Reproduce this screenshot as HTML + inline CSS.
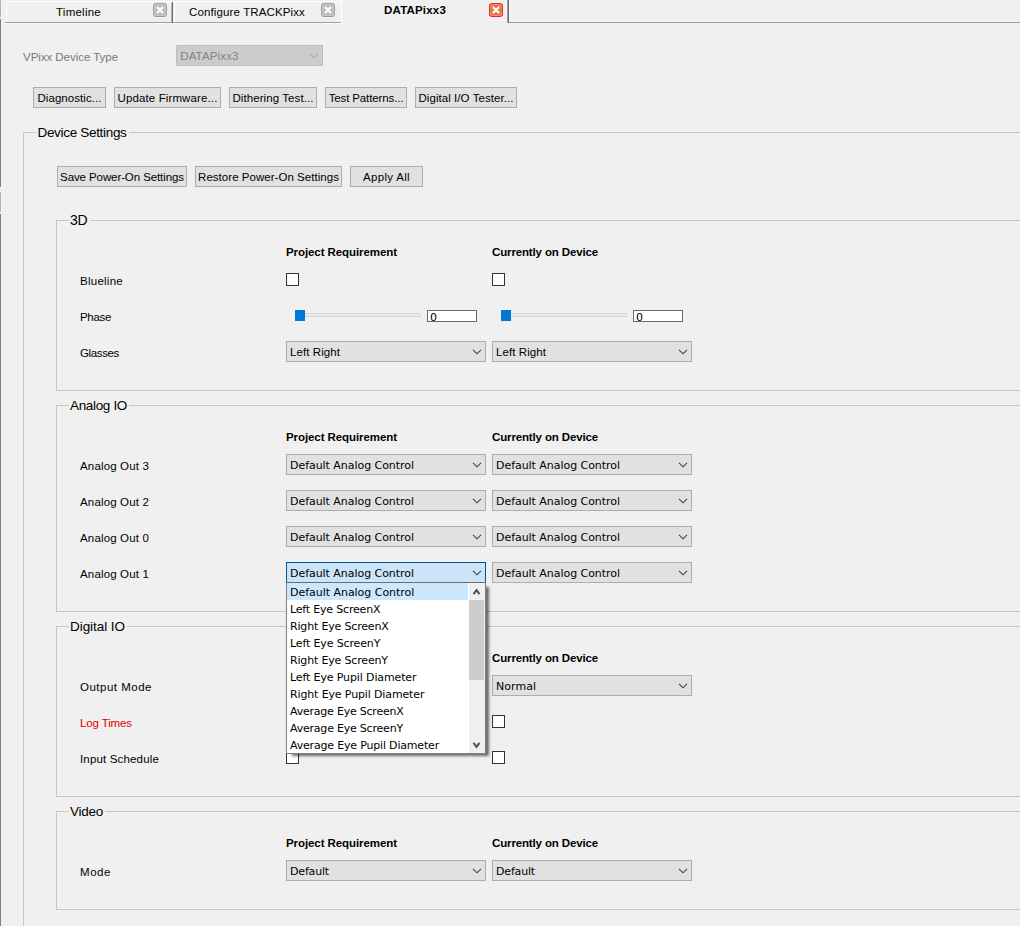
<!DOCTYPE html>
<html lang="en">
<head>
<meta charset="utf-8">
<title>DATAPixx3 - Device Settings</title>
<style>
html,body{margin:0;padding:0;}
body{width:1020px;height:926px;overflow:hidden;background:#f0f0f0;position:relative;font-family:"Liberation Sans",sans-serif;font-size:11.5px;color:#000;}
div,span,button,label,ul,li,input,fieldset,legend{box-sizing:border-box;}
body *{position:absolute;margin:0;padding:0;}
.t{white-space:nowrap;line-height:normal;}
.bl{display:inline-block;position:static;width:0;height:0;vertical-align:baseline;}
svg{overflow:visible;}

.btn{background:#e1e1e1;border:1px solid #adadad;}
.combo{background:#e1e1e1;border:1px solid #adadad;}
.combo.dis{background:#cccccc;border-color:#bfbfbf;}
.combo.focus{background:#cce4f7;border-color:#005499;}
.chk{background:#fff;border:1px solid #333;}
.edit{background:#fff;border:1px solid #6a6a6a;}
.track{background:#e7eaea;border:1px solid #d6d6d6;}
.handle{background:#0078d7;}
.gl{background:#dcdcdc;}
li.sel{background:#cce8ff;}
button{font:inherit;color:inherit;overflow:visible;}

</style>
</head>
<body>
<div style="left:0px;top:0px;width:1px;height:17px;background:#b4b4b4;"></div>
<div style="left:0px;top:19px;width:1px;height:168px;background:#7c818d;"></div>
<div style="left:0px;top:192px;width:1px;height:20px;background:#b4b4b4;"></div>
<div style="left:0px;top:214px;width:1px;height:712px;background:#7c818d;"></div>
<div class="tabbar" style="left:0px;top:0px;width:1020px;height:24px;">
<div style="left:5px;top:22px;width:336px;height:1px;background:#a0a0a0;"></div>
<div style="left:507px;top:22px;width:513px;height:1px;background:#a0a0a0;"></div>
<div style="left:5px;top:23px;width:336px;height:1px;background:#f8f8f8;"></div>
<div style="left:8px;top:1px;width:162px;height:1px;background:#ffffff;"></div>
<div style="left:6px;top:3px;width:1px;height:19px;background:#ffffff;"></div>
<div style="left:7px;top:2px;width:1px;height:1px;background:#ffffff;"></div>
<div style="left:172px;top:2px;width:1px;height:21px;background:#696969;"></div>
<div style="left:171px;top:3px;width:1px;height:19px;background:#b4b4b4;"></div>
<div style="left:175px;top:1px;width:166px;height:1px;background:#ffffff;"></div>
<div style="left:174px;top:2px;width:1px;height:20px;background:#ffffff;"></div>
<div style="left:341px;top:0px;width:1px;height:24px;background:#ffffff;"></div>
<div style="left:507px;top:0px;width:1px;height:23px;background:#a4a4a4;"></div>
<div style="left:508px;top:0px;width:1px;height:23px;background:#696969;"></div>
<div style="left:509px;top:0px;width:1px;height:22px;background:#fafafa;"></div>
<span class="t" style='left:56px;top:6.00px;font-size:11.5px;letter-spacing:0.246px;'>Timeline</span>
<span class="t" style='left:189px;top:6.00px;font-size:11.5px;letter-spacing:0.128px;'>Configure TRACKPixx</span>
<span class="t" style='left:384px;top:4.00px;font-size:11.5px;font-weight:700;letter-spacing:0.189px;'>DATAPixx3</span>
<div class="close" style="left:153px;top:3px;width:14px;height:14px;background:#bdbdbd;border:1px solid #9e9e9e;border-radius:2.5px;box-shadow:inset 0 0 0 1px rgba(255,255,255,0.16);">
<svg style="left:-1px;top:-1px;width:14px;height:14px"><path d="M4,4 L10,10 M10,4 L4,10" stroke="#fff" stroke-width="2" fill="none"/></svg>
</div>
<div class="close" style="left:321px;top:3px;width:14px;height:14px;background:#bdbdbd;border:1px solid #9e9e9e;border-radius:2.5px;box-shadow:inset 0 0 0 1px rgba(255,255,255,0.16);">
<svg style="left:-1px;top:-1px;width:14px;height:14px"><path d="M4,4 L10,10 M10,4 L4,10" stroke="#fff" stroke-width="2" fill="none"/></svg>
</div>
<div class="close" style="left:489px;top:3px;width:14px;height:14px;background:#e27a4e;border:1px solid #d6331f;border-radius:2.5px;box-shadow:inset 0 0 0 1px rgba(255,255,255,0.16);">
<svg style="left:-1px;top:-1px;width:14px;height:14px"><path d="M4,4 L10,10 M10,4 L4,10" stroke="#fff" stroke-width="2" fill="none"/></svg>
</div>
</div>
<span class="t" style='left:23px;top:51.00px;font-size:11.5px;color:#787878;letter-spacing:-0.040px;'>VPixx Device Type</span>
<div class="combo dis" style="left:176px;top:45px;width:147px;height:21px;">
<span class="t" style='left:3.2px;top:4.00px;font-size:11.5px;color:#838383;letter-spacing:0.156px;'>DATAPixx3</span>
<svg class="arrow" style="left:-177px;top:-46px;width:1px;height:1px"><path d="M310,53.8 L314,57.8 L318,53.8" fill="none" stroke="#ababab" stroke-width="1.1"/></svg>
</div>
<button class="btn" style="left:33px;top:87px;width:73px;height:21px;">
<span class="t" style='left:3.5px;top:4.00px;font-size:11.5px;letter-spacing:0.055px;'>Diagnostic...</span>
</button>
<button class="btn" style="left:114px;top:87px;width:107px;height:21px;">
<span class="t" style='left:2.5px;top:4.00px;font-size:11.5px;letter-spacing:0.123px;'>Update Firmware...</span>
</button>
<button class="btn" style="left:229px;top:87px;width:88px;height:21px;">
<span class="t" style='left:2.45px;top:4.00px;font-size:11.5px;letter-spacing:0.083px;'>Dithering Test...</span>
</button>
<button class="btn" style="left:325px;top:87px;width:82px;height:21px;">
<span class="t" style='left:2.65px;top:4.00px;font-size:11.5px;letter-spacing:-0.125px;'>Test Patterns...</span>
</button>
<button class="btn" style="left:415px;top:87px;width:102px;height:21px;">
<span class="t" style='left:2.45px;top:4.00px;font-size:11.5px;letter-spacing:0.064px;'>Digital I/O Tester...</span>
</button>
<fieldset style="left:0px;top:0px;width:0px;height:0px;border:0;">
<div style="left:23px;top:132px;width:1px;height:1869px;background:#c6c7c5;"></div>
<div style="left:23px;top:132px;width:13px;height:1px;background:#c6c7c5;"></div>
<div style="left:129px;top:132px;width:891px;height:1px;background:#c6c7c5;"></div>
<div style="left:23px;top:2000px;width:997px;height:1px;background:#c6c7c5;"></div>
<span class="t legend" style='left:37.5px;top:125.00px;font-size:13.5px;letter-spacing:-0.320px;'>Device Settings</span>
</fieldset>
<button class="btn" style="left:57px;top:166px;width:130px;height:21px;">
<span class="t" style='left:2.05px;top:4.00px;font-size:11.5px;letter-spacing:-0.092px;'>Save Power-On Settings</span>
</button>
<button class="btn" style="left:195px;top:166px;width:147px;height:21px;">
<span class="t" style='left:2.05px;top:4.00px;font-size:11.5px;letter-spacing:0.037px;'>Restore Power-On Settings</span>
</button>
<button class="btn" style="left:350px;top:166px;width:73px;height:21px;">
<span class="t" style='left:12px;top:4.00px;font-size:11.5px;letter-spacing:0.321px;'>Apply All</span>
</button>
<fieldset style="left:0px;top:0px;width:0px;height:0px;border:0;">
<div style="left:56px;top:220px;width:1px;height:171px;background:#c6c7c5;"></div>
<div style="left:56px;top:220px;width:13px;height:1px;background:#c6c7c5;"></div>
<div style="left:90px;top:220px;width:930px;height:1px;background:#c6c7c5;"></div>
<div style="left:56px;top:390px;width:964px;height:1px;background:#c6c7c5;"></div>
<span class="t legend" style='left:70px;top:212.00px;font-size:14px;letter-spacing:-0.203px;'>3D</span>
</fieldset>
<span class="t" style='left:286px;top:246.00px;font-size:11.5px;font-weight:700;letter-spacing:-0.078px;'>Project Requirement</span>
<span class="t" style='left:492px;top:246.00px;font-size:11.5px;font-weight:700;letter-spacing:-0.140px;'>Currently on Device</span>
<span class="t" style='left:80px;top:275.00px;font-size:11.5px;letter-spacing:0.260px;'>Blueline</span>
<div class="chk" style="left:286px;top:273px;width:13px;height:13px;"></div>
<div class="chk" style="left:492px;top:273px;width:13px;height:13px;"></div>
<span class="t" style='left:80px;top:311.00px;font-size:11.5px;letter-spacing:-0.322px;'>Phase</span>
<div class="track" style="left:304px;top:313px;width:117px;height:4px;"></div>
<div class="handle" style="left:295px;top:310px;width:10px;height:11px;"></div>
<div class="edit" style="left:427px;top:310px;width:50px;height:12px;">
<span class="t" style='left:2px;top:0.00px;font-size:11px;font-family:"DejaVu Sans", sans-serif;'>0</span>
</div>
<div class="track" style="left:510px;top:313px;width:117px;height:4px;"></div>
<div class="handle" style="left:501px;top:310px;width:10px;height:11px;"></div>
<div class="edit" style="left:633px;top:310px;width:50px;height:12px;">
<span class="t" style='left:2px;top:0.00px;font-size:11px;font-family:"DejaVu Sans", sans-serif;'>0</span>
</div>
<span class="t" style='left:80px;top:347.00px;font-size:11.5px;letter-spacing:-0.364px;'>Glasses</span>
<div class="combo" style="left:286px;top:341px;width:200px;height:21px;">
<span class="t" style='left:3px;top:4.00px;font-size:11.5px;letter-spacing:0.077px;'>Left Right</span>
<svg class="arrow" style="left:-287px;top:-342px;width:1px;height:1px"><path d="M473,349.8 L477,353.8 L481,349.8" fill="none" stroke="#404040" stroke-width="1.1"/></svg>
</div>
<div class="combo" style="left:492px;top:341px;width:200px;height:21px;">
<span class="t" style='left:3px;top:4.00px;font-size:11.5px;letter-spacing:0.077px;'>Left Right</span>
<svg class="arrow" style="left:-493px;top:-342px;width:1px;height:1px"><path d="M679,349.8 L683,353.8 L687,349.8" fill="none" stroke="#404040" stroke-width="1.1"/></svg>
</div>
<fieldset style="left:0px;top:0px;width:0px;height:0px;border:0;">
<div style="left:56px;top:405px;width:1px;height:207px;background:#c6c7c5;"></div>
<div style="left:56px;top:405px;width:13px;height:1px;background:#c6c7c5;"></div>
<div style="left:129px;top:405px;width:891px;height:1px;background:#c6c7c5;"></div>
<div style="left:56px;top:611px;width:964px;height:1px;background:#c6c7c5;"></div>
<span class="t legend" style='left:70px;top:398.00px;font-size:13.5px;letter-spacing:-0.339px;'>Analog IO</span>
</fieldset>
<span class="t" style='left:286px;top:431.00px;font-size:11.5px;font-weight:700;letter-spacing:-0.078px;'>Project Requirement</span>
<span class="t" style='left:492px;top:431.00px;font-size:11.5px;font-weight:700;letter-spacing:-0.140px;'>Currently on Device</span>
<span class="t" style='left:80px;top:460.00px;font-size:11.5px;letter-spacing:0.155px;'>Analog Out 3</span>
<div class="combo" style="left:286px;top:454px;width:200px;height:21px;">
<span class="t" style='left:3px;top:4.00px;font-size:11px;font-family:"DejaVu Sans", sans-serif;letter-spacing:-0.043px;'>Default Analog Control</span>
<svg class="arrow" style="left:-287px;top:-455px;width:1px;height:1px"><path d="M473,462.8 L477,466.8 L481,462.8" fill="none" stroke="#404040" stroke-width="1.1"/></svg>
</div>
<div class="combo" style="left:492px;top:454px;width:200px;height:21px;">
<span class="t" style='left:3px;top:4.00px;font-size:11px;font-family:"DejaVu Sans", sans-serif;letter-spacing:-0.043px;'>Default Analog Control</span>
<svg class="arrow" style="left:-493px;top:-455px;width:1px;height:1px"><path d="M679,462.8 L683,466.8 L687,462.8" fill="none" stroke="#404040" stroke-width="1.1"/></svg>
</div>
<span class="t" style='left:80px;top:496.00px;font-size:11.5px;letter-spacing:0.155px;'>Analog Out 2</span>
<div class="combo" style="left:286px;top:490px;width:200px;height:21px;">
<span class="t" style='left:3px;top:4.00px;font-size:11px;font-family:"DejaVu Sans", sans-serif;letter-spacing:-0.043px;'>Default Analog Control</span>
<svg class="arrow" style="left:-287px;top:-491px;width:1px;height:1px"><path d="M473,498.8 L477,502.8 L481,498.8" fill="none" stroke="#404040" stroke-width="1.1"/></svg>
</div>
<div class="combo" style="left:492px;top:490px;width:200px;height:21px;">
<span class="t" style='left:3px;top:4.00px;font-size:11px;font-family:"DejaVu Sans", sans-serif;letter-spacing:-0.043px;'>Default Analog Control</span>
<svg class="arrow" style="left:-493px;top:-491px;width:1px;height:1px"><path d="M679,498.8 L683,502.8 L687,498.8" fill="none" stroke="#404040" stroke-width="1.1"/></svg>
</div>
<span class="t" style='left:80px;top:532.00px;font-size:11.5px;letter-spacing:0.155px;'>Analog Out 0</span>
<div class="combo" style="left:286px;top:526px;width:200px;height:21px;">
<span class="t" style='left:3px;top:4.00px;font-size:11px;font-family:"DejaVu Sans", sans-serif;letter-spacing:-0.043px;'>Default Analog Control</span>
<svg class="arrow" style="left:-287px;top:-527px;width:1px;height:1px"><path d="M473,534.8 L477,538.8 L481,534.8" fill="none" stroke="#404040" stroke-width="1.1"/></svg>
</div>
<div class="combo" style="left:492px;top:526px;width:200px;height:21px;">
<span class="t" style='left:3px;top:4.00px;font-size:11px;font-family:"DejaVu Sans", sans-serif;letter-spacing:-0.043px;'>Default Analog Control</span>
<svg class="arrow" style="left:-493px;top:-527px;width:1px;height:1px"><path d="M679,534.8 L683,538.8 L687,534.8" fill="none" stroke="#404040" stroke-width="1.1"/></svg>
</div>
<span class="t" style='left:80px;top:568.00px;font-size:11.5px;letter-spacing:0.155px;'>Analog Out 1</span>
<div class="combo focus" style="left:286px;top:562px;width:200px;height:21px;">
<span class="t" style='left:3px;top:4.00px;font-size:11px;font-family:"DejaVu Sans", sans-serif;letter-spacing:-0.043px;'>Default Analog Control</span>
<svg class="arrow" style="left:-287px;top:-563px;width:1px;height:1px"><path d="M473,570.8 L477,574.8 L481,570.8" fill="none" stroke="#404040" stroke-width="1.1"/></svg>
</div>
<div class="combo" style="left:492px;top:562px;width:200px;height:21px;">
<span class="t" style='left:3px;top:4.00px;font-size:11px;font-family:"DejaVu Sans", sans-serif;letter-spacing:-0.043px;'>Default Analog Control</span>
<svg class="arrow" style="left:-493px;top:-563px;width:1px;height:1px"><path d="M679,570.8 L683,574.8 L687,570.8" fill="none" stroke="#404040" stroke-width="1.1"/></svg>
</div>
<fieldset style="left:0px;top:0px;width:0px;height:0px;border:0;">
<div style="left:56px;top:626px;width:1px;height:171px;background:#c6c7c5;"></div>
<div style="left:56px;top:626px;width:13px;height:1px;background:#c6c7c5;"></div>
<div style="left:127px;top:626px;width:893px;height:1px;background:#c6c7c5;"></div>
<div style="left:56px;top:796px;width:964px;height:1px;background:#c6c7c5;"></div>
<span class="t legend" style='left:70px;top:619.00px;font-size:13.5px;letter-spacing:-0.053px;'>Digital IO</span>
</fieldset>
<span class="t" style='left:492px;top:652.00px;font-size:11.5px;font-weight:700;letter-spacing:-0.140px;'>Currently on Device</span>
<span class="t" style='left:80px;top:681.00px;font-size:11.5px;letter-spacing:0.501px;'>Output Mode</span>
<div class="combo" style="left:492px;top:675px;width:200px;height:21px;">
<span class="t" style='left:3px;top:4.00px;font-size:11px;font-family:"DejaVu Sans", sans-serif;letter-spacing:0.031px;'>Normal</span>
<svg class="arrow" style="left:-493px;top:-676px;width:1px;height:1px"><path d="M679,683.8 L683,687.8 L687,683.8" fill="none" stroke="#404040" stroke-width="1.1"/></svg>
</div>
<span class="t" style='left:80px;top:717.00px;font-size:11.5px;color:#e00000;letter-spacing:-0.118px;'>Log Times</span>
<div class="chk" style="left:492px;top:715px;width:13px;height:13px;"></div>
<span class="t" style='left:80px;top:753.00px;font-size:11.5px;letter-spacing:0.162px;'>Input Schedule</span>
<div class="chk" style="left:286px;top:751px;width:13px;height:13px;"></div>
<div class="chk" style="left:492px;top:751px;width:13px;height:13px;"></div>
<fieldset style="left:0px;top:0px;width:0px;height:0px;border:0;">
<div style="left:56px;top:811px;width:1px;height:99px;background:#c6c7c5;"></div>
<div style="left:56px;top:811px;width:13px;height:1px;background:#c6c7c5;"></div>
<div style="left:105px;top:811px;width:915px;height:1px;background:#c6c7c5;"></div>
<div style="left:56px;top:909px;width:964px;height:1px;background:#c6c7c5;"></div>
<span class="t legend" style='left:70px;top:804.00px;font-size:13.5px;letter-spacing:-0.259px;'>Video</span>
</fieldset>
<span class="t" style='left:286px;top:837.00px;font-size:11.5px;font-weight:700;letter-spacing:-0.078px;'>Project Requirement</span>
<span class="t" style='left:492px;top:837.00px;font-size:11.5px;font-weight:700;letter-spacing:-0.140px;'>Currently on Device</span>
<span class="t" style='left:80px;top:866.00px;font-size:11.5px;letter-spacing:0.555px;'>Mode</span>
<div class="combo" style="left:286px;top:860px;width:200px;height:21px;">
<span class="t" style='left:3px;top:4.00px;font-size:11px;font-family:"DejaVu Sans", sans-serif;letter-spacing:-0.172px;'>Default</span>
<svg class="arrow" style="left:-287px;top:-861px;width:1px;height:1px"><path d="M473,868.8 L477,872.8 L481,868.8" fill="none" stroke="#404040" stroke-width="1.1"/></svg>
</div>
<div class="combo" style="left:492px;top:860px;width:200px;height:21px;">
<span class="t" style='left:3px;top:4.00px;font-size:11px;font-family:"DejaVu Sans", sans-serif;letter-spacing:-0.172px;'>Default</span>
<svg class="arrow" style="left:-493px;top:-861px;width:1px;height:1px"><path d="M679,868.8 L683,872.8 L687,868.8" fill="none" stroke="#404040" stroke-width="1.1"/></svg>
</div>
<div class="popup" style="left:286px;top:582px;width:200px;height:172px;background:#fff;border:1px solid #7c808a;border-top-color:#6f6f6f;box-shadow:4px 3.5px 2.5px -1.5px rgba(0,0,0,0.55);">
<ul style="left:0px;top:0px;width:0px;height:0px;list-style:none;">
<li class="sel" style="left:0px;top:0px;width:181px;height:17px;">
<span class="t" style='left:3px;top:3.00px;font-size:11px;font-family:"DejaVu Sans", sans-serif;letter-spacing:-0.030px;'>Default Analog Control</span>
</li>
<li style="left:0px;top:17px;width:181px;height:17px;">
<span class="t" style='left:3px;top:3.00px;font-size:11px;font-family:"DejaVu Sans", sans-serif;letter-spacing:-0.186px;'>Left Eye ScreenX</span>
</li>
<li style="left:0px;top:34px;width:181px;height:17px;">
<span class="t" style='left:3px;top:3.00px;font-size:11px;font-family:"DejaVu Sans", sans-serif;letter-spacing:-0.173px;'>Right Eye ScreenX</span>
</li>
<li style="left:0px;top:51px;width:181px;height:17px;">
<span class="t" style='left:3px;top:3.00px;font-size:11px;font-family:"DejaVu Sans", sans-serif;letter-spacing:-0.135px;'>Left Eye ScreenY</span>
</li>
<li style="left:0px;top:68px;width:181px;height:17px;">
<span class="t" style='left:3px;top:3.00px;font-size:11px;font-family:"DejaVu Sans", sans-serif;letter-spacing:-0.167px;'>Right Eye ScreenY</span>
</li>
<li style="left:0px;top:85px;width:181px;height:17px;">
<span class="t" style='left:3px;top:3.00px;font-size:11px;font-family:"DejaVu Sans", sans-serif;letter-spacing:-0.125px;'>Left Eye Pupil Diameter</span>
</li>
<li style="left:0px;top:102px;width:181px;height:17px;">
<span class="t" style='left:3px;top:3.00px;font-size:11px;font-family:"DejaVu Sans", sans-serif;letter-spacing:-0.135px;'>Right Eye Pupil Diameter</span>
</li>
<li style="left:0px;top:119px;width:181px;height:17px;">
<span class="t" style='left:3px;top:3.00px;font-size:11px;font-family:"DejaVu Sans", sans-serif;letter-spacing:-0.218px;'>Average Eye ScreenX</span>
</li>
<li style="left:0px;top:136px;width:181px;height:17px;">
<span class="t" style='left:3px;top:3.00px;font-size:11px;font-family:"DejaVu Sans", sans-serif;letter-spacing:-0.212px;'>Average Eye ScreenY</span>
</li>
<li style="left:0px;top:153px;width:181px;height:17px;">
<span class="t" style='left:3px;top:3.00px;font-size:11px;font-family:"DejaVu Sans", sans-serif;letter-spacing:-0.183px;'>Average Eye Pupil Diameter</span>
</li>
</ul>
<div style="left:181px;top:0px;width:1px;height:170px;background:#ffffff;"></div>
<div style="left:182px;top:0px;width:16px;height:170px;background:#f0f0f0;"></div>
<div style="left:182px;top:17px;width:15px;height:80px;background:#cdcdcd;"></div>
<svg class="arrow" style="left:-287px;top:-583px;width:1px;height:1px"><path d="M473.5,594.2 L476.5,590.2 L479.5,594.2" fill="none" stroke="#505050" stroke-width="2"/></svg>
<svg class="arrow" style="left:-287px;top:-583px;width:1px;height:1px"><path d="M473.5,742.8 L476.5,746.8 L479.5,742.8" fill="none" stroke="#505050" stroke-width="2"/></svg>
</div>
</body>
</html>
